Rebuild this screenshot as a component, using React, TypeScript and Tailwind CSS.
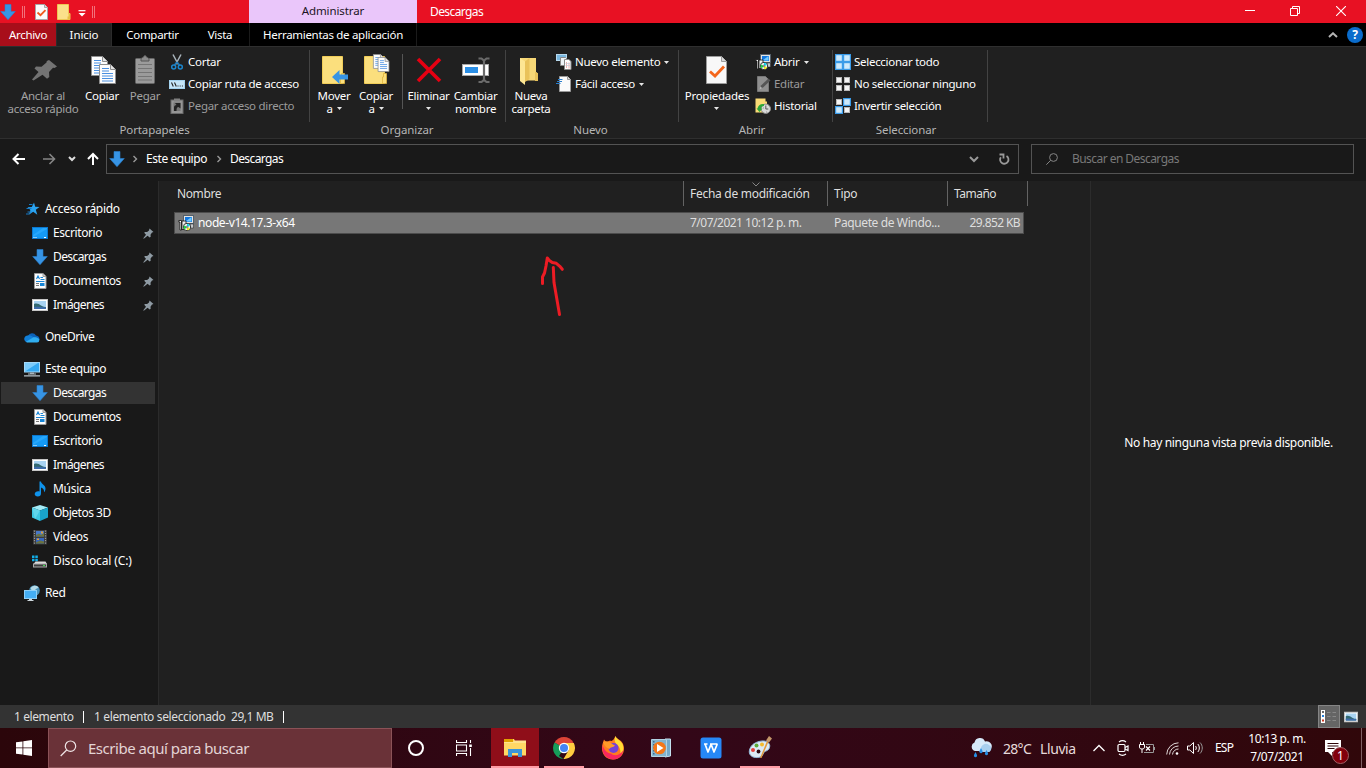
import React from "react";

type IconProps = { className?: string };

/* ---------- shared glyphs ---------- */

const DownArrow = ({ className = "size-4" }: IconProps) => (
  <svg viewBox="0 0 16 16" className={className}>
    <path d="M5 .5h6v7h4.3L8 15.7.7 7.5H5z" fill="#3794e4" stroke="#2a82cf" strokeWidth=".6" />
  </svg>
);

const Caret = () => (
  <svg viewBox="0 0 5 3" className="h-[3px] w-[5px] flex-none">
    <path d="M0 0h5L2.5 3z" fill="#e6e6e6" />
  </svg>
);

const Chevron = ({ className = "h-2 w-1.5" }: IconProps) => (
  <svg viewBox="0 0 6 8" className={className}>
    <path d="M1.5 1l3 3-3 3" fill="none" stroke="#999" strokeWidth="1.4" />
  </svg>
);

const Page = ({ x, y, w, h, lines = 6 }: { x: number; y: number; w: number; h: number; lines?: number }) => (
  <g>
    <path d={`M${x + 0.5} ${y + 0.5}h${w - 6}l5 5v${h - 6}h${-(w - 1)}z`} fill="#fdfdfd" stroke="#8f8f8f" />
    <path d={`M${x + w - 5.5} ${y + 0.5}v5h5`} fill="#e4e4e4" stroke="#8f8f8f" />
    {Array.from({ length: lines }, (_, i) => (
      <path key={i} d={`M${x + 3} ${y + 4.5 + i * 2.5}h${i < 2 ? w - 10 : w - 6}`} stroke="#4a8fe0" />
    ))}
  </g>
);

/* ---------- ribbon icons ---------- */

const PinBig = () => (
  <svg viewBox="0 0 32 32" className="size-8">
    <path d="M22 6l8 6.500-2.500 1.500-1.500-.2-4 4.200.3 5-2.300 1.700-4.500-4L6.500 26.500 5 25.500l6.500-7.500-4-3.500 1.500-2 5.500.2 5-4.200.3-1.500z" fill="#737373" />
  </svg>
);

const CopyBig = () => (
  <svg viewBox="0 0 32 32" className="size-8">
    <Page x={5} y={2} w={17} h={20} lines={6} />
    <Page x={13} y={10} w={17} h={20} lines={6} />
  </svg>
);

const PasteBig = () => (
  <svg viewBox="0 0 32 32" className="size-8">
    <rect x="6.500" y="4.500" width="19" height="25" rx="1" fill="#9b9b9b" stroke="#666" />
    <path d="M12 5.500c0-2 2-2 2.500-2.500.5-2 2.500-2 3 0 .5.500 2.500.5 2.500 2.500v1.500h-8z" fill="#8b8b8b" stroke="#555" />
    <path d="M9 10.500h14M9 14.500h14M9 18.500h14M9 22.500h14M9 26h14" stroke="#757575" />
  </svg>
);

const Scissors = () => (
  <svg viewBox="0 0 16 16" className="size-4">
    <path d="M4 .5L9.300 10.500M12 .5L6.700 10.500" stroke="#a9b4bc" strokeWidth="1.500" fill="none" />
    <path d="M8 8l-2.500 3M8 8l2.500 3" stroke="#1b78b8" strokeWidth="1.500" />
    <circle cx="4.700" cy="13" r="2" fill="none" stroke="#1b86cc" strokeWidth="1.500" />
    <circle cx="11.300" cy="13" r="2" fill="none" stroke="#1b86cc" strokeWidth="1.500" />
  </svg>
);

const PathIcon = () => (
  <svg viewBox="0 0 16 16" className="size-4">
    <rect x=".5" y="4.500" width="15" height="8" fill="#c5e5f8" stroke="#a4d2ee" />
    <path d="M2.500 6.500l1.800 4M5.500 6.500l1.800 4" stroke="#222" strokeWidth="1.100" />
    <path d="M8.500 10h1M10.700 10h1M12.900 10h1" stroke="#222" />
  </svg>
);

const PasteShortcut = () => (
  <svg viewBox="0 0 16 16" className="size-4">
    <rect x="2" y="2" width="12" height="13.500" fill="#969696" stroke="#6b6b6b" />
    <rect x="5" y=".5" width="6" height="3" fill="#808080" />
    <path d="M4.500 4.500h7v8.500h-7z" fill="#777" />
    <path d="M5 13v-3.500C5 8 6 7 7.500 7L6 5h5.500v5.500L9.500 9C8 9 7.500 10.500 7.500 13z" fill="#222" />
  </svg>
);

const FolderShape = () => (
  <g>
    <path d="M4.500 2.500h20v27h-20z" fill="#fbdf7d" stroke="#f1cd58" />
    <path d="M22.500 29.500v-6.500h1V19.500h3v10z" fill="#fbdf7d" stroke="#dfb53d" strokeWidth=".8" />
  </g>
);

const MoveTo = () => (
  <svg viewBox="0 0 32 32" className="size-8">
    <FolderShape />
    <path d="M14 23l7.500-7v4.500H30v5h-8.500V30z" fill="#3794e4" />
  </svg>
);

const CopyTo = () => (
  <svg viewBox="0 0 32 32" className="size-8">
    <FolderShape />
    <g transform="translate(13 0) scale(.78)">
      <Page x={0} y={0} w={15} h={19} lines={5} />
      <Page x={6} y={4} w={15} h={19} lines={5} />
    </g>
  </svg>
);

const DeleteX = () => (
  <svg viewBox="0 0 32 32" className="size-8">
    <path d="M5 5l22 22M27 5L5 27" stroke="#e60012" strokeWidth="3.600" />
  </svg>
);

const Rename = () => (
  <svg viewBox="0 0 32 32" className="size-8">
    <rect x="2.500" y="10.500" width="26" height="11" fill="#fff" stroke="#a8a8a8" />
    <rect x="5" y="13" width="13" height="6" fill="#2b8fe6" />
    <path d="M18.500 4.500h3l2.500 2 2.500-2h3M18.500 28h3l2.500-2 2.500 2h3M24 6v20.500" fill="none" stroke="#6b6b6b" strokeWidth="2.200" />
  </svg>
);

const NewFolder = () => (
  <svg viewBox="0 0 32 32" className="size-8">
    <path d="M5 4h16v14l2 1.500v7H5z" fill="#f7d877" />
    <path d="M10 7.500L14.500 4v21L10 28z" fill="#e9c25a" />
    <path d="M5 4l5 3.500v23.500l-5-4z" fill="#fde694" />
    <path d="M20 18h1l2 1.500v7.500h-3z" fill="#e9c25a" />
  </svg>
);

const NewItem = () => (
  <svg viewBox="0 0 16 16" className="size-4">
    <rect x=".5" y=".5" width="10" height="6" fill="#79b7df" stroke="#b7d9ee" />
    <path d="M4.500 3.500h5l2 2v6h-7z" fill="#eef4f8" stroke="#8a8a8a" />
    <path d="M8.500 5.500h4.500l2 2v8H8.500z" fill="#fff" stroke="#8a8a8a" />
    <path d="M10.500 8v6M13 8.500v6" stroke="#e89c9c" strokeWidth=".8" />
    <path d="M9.500 9.500h5M9.500 11.500h5" stroke="#bcd" strokeWidth=".6" />
  </svg>
);

const EasyAccess = () => (
  <svg viewBox="0 0 16 16" className="size-4">
    <path d="M3.500.5h8l3 3v12h-11z" fill="#fafafa" stroke="#999" />
    <path d="M11.500.5v3h3" fill="#ddd" stroke="#999" />
    <path d="M2 3.500h4.500M1 5.500h5M0 7.500h4.500" stroke="#2b7ecb" strokeWidth="1.100" />
  </svg>
);

const Properties = () => (
  <svg viewBox="0 0 32 32" className="size-8">
    <path d="M5.500 2.500h15l5 5v22h-20z" fill="#f8f8f8" stroke="#9c9c9c" />
    <path d="M20.500 2.500v5h5" fill="#d8d8d8" stroke="#9c9c9c" />
    <path d="M9 17.500l5 4.500L23 12.500" fill="none" stroke="#f4661b" strokeWidth="2.800" />
  </svg>
);

const Installer = () => (
  <svg viewBox="0 0 16 16" className="size-4">
    <rect x="5.500" y=".5" width="10" height="8" fill="#e3e3e3" stroke="#55606a" />
    <rect x="7" y="2" width="7" height="5" fill="#1478e0" />
    <path d="M7.500 6.500L13.500 2v4.500z" fill="#6fcaff" />
    <path d="M12 9h3.500v4H12z" fill="#c4c9cd" stroke="#222" strokeWidth=".5" />
    <path d="M.8 5.500h2.700v9.500H2v-8H.8z" fill="#fff" stroke="#111" strokeWidth=".8" />
    <path d="M4 6h4v8.500H4z" fill="#f2f2f2" stroke="#111" strokeWidth=".8" />
    <circle cx="9" cy="12" r="3.700" fill="#f4f4f4" stroke="#111" strokeWidth=".8" />
    <path d="M9 12V8.800a3.200 3.200 0 013 2.200z" fill="#14d8f4" />
    <path d="M9 12l3.100 1.200A3.200 3.200 0 019 15.200z" fill="#f0f020" />
    <path d="M9 12l-3-1.500A3.200 3.200 0 006.700 14.300z" fill="#1fd84a" />
    <circle cx="9" cy="12" r="1" fill="#fff" stroke="#111" strokeWidth=".5" />
  </svg>
);

const EditIcon = () => (
  <svg viewBox="0 0 16 16" className="size-4">
    <path d="M2.500.5h8l3 3v12h-11z" fill="#8f8f8f" stroke="#777" />
    <path d="M5 12.500l1-3 7.500-7 2 2-7.500 7z" fill="#555" />
    <path d="M4.500 13.500l1-3 1.500 1.500z" fill="#bbb" />
  </svg>
);

const HistoryIcon = () => (
  <svg viewBox="0 0 16 16" className="size-4">
    <path d="M.5.5h10v3h1.500V14.500H.5z" fill="#fadb76" />
    <circle cx="10.800" cy="10.800" r="4.700" fill="#d9d9d9" stroke="#8a8a8a" />
    <path d="M10.800 7.500v3.500h2.500M8 10h.5M11 14h.5" stroke="#555" fill="none" />
    <path d="M2.500 10.500C3 7.500 5.500 5.500 9 6v2C7 8 6.300 9 6 10.500h1.500l-3 3.500-3-3.500z" fill="#2fa739" />
  </svg>
);

const SelectGrid = ({ on }: { on: [boolean, boolean, boolean, boolean] }) => (
  <svg viewBox="0 0 16 16" className="size-4">
    {on.map((active, i) => {
      const x = (i % 2) * 8;
      const y = Math.floor(i / 2) * 8;
      return active ? (
        <g key={i}>
          <rect x={x} y={y} width="8" height="8" fill="#3a9be8" />
          <rect x={x + 1.2} y={y + 1.2} width="5.600" height="5.600" fill="#cde9fb" />
        </g>
      ) : (
        <rect key={i} x={x + 1.5} y={y + 1.5} width="5" height="5" fill="#f5f5f5" stroke="#b9b9b9" />
      );
    })}
  </svg>
);

/* ---------- navigation pane icons ---------- */

const QuickStar = () => (
  <svg viewBox="0 0 16 16" className="size-4">
    <path d="M10 1.500l1.200 4.300 4.300.3-3.700 2.700 1.500 4.900-4.100-2.900-4.300 3 1.500-4.700L3.500 6.300l4.300-.2z" fill="#2aa3f0" />
    <path d="M5 3.500h3.500M2.500 7.500h5M3.500 11h4M2 13h3" stroke="#1679c4" strokeWidth="1.100" />
  </svg>
);

const DesktopIcon = () => (
  <svg viewBox="0 0 16 16" className="size-4">
    <rect x=".5" y="2.500" width="15" height="11" fill="#159af5" stroke="#0b78cf" />
    <path d="M1 12V10L11 3h4v1z" fill="#35b0ff" opacity=".6" />
    <path d="M1.500 12.500h1M3.500 12.500h1M12 12.500h2" stroke="#fff" />
  </svg>
);

const DocIcon = () => (
  <svg viewBox="0 0 16 16" className="size-4">
    <path d="M2.500.5h8.500l3 3v12H2.500z" fill="#fbfbfb" stroke="#9b9b9b" />
    <path d="M11 .5v3h3" fill="#ccc" stroke="#9b9b9b" />
    <path d="M4.500 6l1.500-3 1.500 3M8.500 4.500H11M8.500 6.500h4M4 8.500h8.500" stroke="#1785d6" strokeWidth="1.100" fill="none" />
    <path d="M4 10.500h3M4 12.500h3" stroke="#777" />
    <rect x="8" y="10" width="4.500" height="3" fill="#1785d6" />
  </svg>
);

const ImageIcon = ({ className = "size-4" }: IconProps) => (
  <svg viewBox="0 0 16 16" className={className}>
    <rect x=".5" y="2.500" width="15" height="11" fill="#fff" stroke="#c7c7c7" />
    <rect x="2" y="4" width="12" height="8" fill="#a9d3f2" />
    <path d="M2 7c3-1 5 0 7 1.500s4 1.500 5 1.500v2H2z" fill="#346a72" />
    <path d="M2 10c4-.5 8 0 12 .6V12H2z" fill="#3f6cab" />
  </svg>
);

const OneDriveIcon = () => (
  <svg viewBox="0 0 16 16" className="size-4">
    <path d="M4 7a4.500 4.500 0 018-.5 4 4 0 013.500 4L8 12.500 2 11z" fill="#0d62b8" />
    <path d="M3.500 6.500A3.400 3.400 0 001 12c.5 1 1.500 1.300 2.500 1.300L11 9 7 6.800A4 4 0 003.500 6.500z" fill="#117fd8" />
    <path d="M2 12.800L9.500 8.300c1-.3 4.500-.3 6 2.200a3 3 0 01-2.500 3H3.500c-.6 0-1-.2-1.500-.7z" fill="#30aef0" />
  </svg>
);

const PcIcon = () => (
  <svg viewBox="0 0 16 16" className="size-4">
    <rect x=".5" y="1.500" width="15" height="9.500" fill="#35a9f2" stroke="#a3d8f8" />
    <path d="M1 10.500L14 2H1z" fill="#7ccbfa" />
    <path d="M6 11.500h4v1.500H6z" fill="#9aa8b1" />
    <path d="M4 13h8M0 14.900h16" stroke="#b6c1c8" strokeWidth="1.100" />
  </svg>
);

const MusicIcon = () => (
  <svg viewBox="0 0 16 16" className="size-4">
    <path d="M7.500.5H9c.3 3 4.500 3.500 4.500 7 0 2-.7 3-1.500 3.800.3-2.500-.7-4-3-4.800v5.700A3.300 3.300 0 015.700 15.500C4 15.500 2.700 14.600 2.700 13c0-2 2.500-3.300 4.800-2.600z" fill="#0f93ec" />
  </svg>
);

const CubeIcon = () => (
  <svg viewBox="0 0 16 16" className="size-4">
    <path d="M8 0l8 2.500L8 5.500 0 2.500z" fill="#a4ebf7" />
    <path d="M0 2.500l8 3V16l-8-3.500z" fill="#3cc7e2" />
    <path d="M16 2.500l-8 3V16l8-3.500z" fill="#19a2c9" />
    <path d="M0 2.500l8 3L3 14z" fill="#78dff1" opacity=".6" />
  </svg>
);

const VideoIcon = () => (
  <svg viewBox="0 0 16 16" className="size-4">
    <rect x="1" y="1" width="14" height="14.500" fill="#3b3b3b" />
    <path d="M2.500 1.500v14M13.500 1.500v14" stroke="#999" strokeWidth="1.200" strokeDasharray="1.200 1.200" />
    <rect x="4" y="2" width="8" height="5.500" fill="#4878c8" />
    <rect x="4" y="9" width="8" height="5.500" fill="#3767bd" />
    <path d="M4 6l3-1.500 2 1.500 3-2v3.500H4zM4 13.500l4-2 4 1v2H4z" fill="#6b7440" />
    <path d="M9 2.500h2v2H9zM5 9.500h2v1.500H5z" fill="#e0a03a" />
  </svg>
);

const DiskIcon = () => (
  <svg viewBox="0 0 16 16" className="size-4">
    <path d="M0 2.500h2.500V5H0zM3.300 2.500h2.500V5H3.300zM0 5.800h2.500v2.500H0zM3.300 5.800h2.500v2.500H3.300z" fill="#12afe9" />
    <path d="M3.500 8.500h10L15 11H1.500z" fill="#dcdcdc" />
    <path d="M1 10.500h14v4H1z" fill="#a8a8a8" />
    <path d="M2 11.500h12v2H2z" fill="#3e3e3e" />
    <path d="M11 12.500h2" stroke="#3ddc4d" />
  </svg>
);

const NetworkIcon = () => (
  <svg viewBox="0 0 16 16" className="size-4">
    <circle cx="10.500" cy="5.500" r="5.300" fill="#4a92b9" />
    <path d="M6.500 3a5.500 5.500 0 018-.8c-1 1.500-2 1-3 2.300S9.500 7 8 6z" fill="#b4dbe8" />
    <rect x=".5" y="5.500" width="12" height="8" fill="#45aef4" stroke="#8fd0f8" />
    <path d="M5 14h3v1.200H5zM3.500 15h6v.9h-6z" fill="#cfd8dd" />
  </svg>
);

const SmallPin = () => (
  <svg viewBox="0 0 11 11" className="size-[11px]">
    <path d="M6.500.5l4 3.500-1.500.5-1.500 2.200.2 2.100-1.100.7-2-1.800L.8 10.700l-.5-.5L3 6.700 1.200 4.800l.8-.9 2.100.1 1.900-1.500z" fill="#8f9ba4" />
  </svg>
);

/* ---------- window chrome ---------- */

const TitleBar = () => (
  <header className="flex h-[23px] w-full bg-[#e81123] text-[12px] text-white">
    <div className="flex w-[249px] items-center">
      <DownArrow />
      <span className="ml-1.5 h-3 w-[3px] border-x border-[#f2707b]" />
      <svg viewBox="0 0 13 16" className="ml-[10px] h-4 w-[13px]">
        <path d="M.5.5h9l3 3v12H.5z" fill="#fbfbfb" stroke="#a7a7a7" />
        <path d="M9.500.5v3h3" fill="#ddd" stroke="#a7a7a7" />
        <path d="M2.500 8.500l3 2.700 5-5" fill="none" stroke="#f05a1e" strokeWidth="1.800" />
      </svg>
      <svg viewBox="0 0 14 16" className="ml-[9px] h-4 w-3.5">
        <path d="M.5.500h11v9h1.500v6H.5z" fill="#fbe08a" stroke="#edc654" />
        <path d="M10.500 15.500v-3h1V10H13v5.500z" fill="#e9bd42" />
      </svg>
      <svg viewBox="0 0 8 7" className="mt-1 ml-[7px] h-[7px] w-2">
        <path d="M.5.700h7" stroke="#fff" strokeWidth="1.200" />
        <path d="M.5 3h7L4 6.500z" fill="#fff" />
      </svg>
      <span className="ml-1.5 h-3 w-[3px] border-x border-[#f2707b]" />
    </div>
    <div className="flex w-[168px] justify-center bg-[#eac6fa] text-[11.5px] leading-[21px] tracking-[-.1px] text-[#1b141e]">Administrar</div>
    <div className="flex-1 pl-[13px] leading-6 tracking-[-.6px]">Descargas</div>
    <div className="flex h-[21px] w-[139px] items-center pl-[18px]">
      <span className="h-px w-2.5 bg-white" />
      <svg viewBox="0 0 10 10" className="ml-[35px] size-2.5" fill="none" stroke="#fff">
        <path d="M.5 2.500h7v7h-7zM2.500 2.500v-2h7v7h-2" />
      </svg>
      <svg viewBox="0 0 10 10" className="ml-9 size-2.5" stroke="#fff" strokeWidth="1.100">
        <path d="M0 0l10 10M10 0L0 10" />
      </svg>
    </div>
  </header>
);

const TabBar = () => (
  <nav className="flex h-[23px] bg-black text-center text-[11.5px] leading-6 tracking-[-.3px] whitespace-nowrap text-white">
    <div className="w-14 bg-[#a80e1a]">Archivo</div>
    <div className="w-14 border-x border-t border-[#2b2b2b] bg-[#202020] leading-[22px] tracking-[-.1px]">Inicio</div>
    <div className="w-[81px]">Compartir</div>
    <div className="w-[54px]">Vista</div>
    <div className="ml-0.5 w-[168px] border-x border-[#1b1b1b]">Herramientas de aplicación</div>
    <div className="flex flex-1 items-center justify-end gap-[9px] pr-[3px]">
      <svg viewBox="0 0 10 6" className="h-1.5 w-2.5">
        <path d="M1 5l4-3.700L9 5" fill="none" stroke="#b5b5b5" strokeWidth="2" />
      </svg>
      <span className="flex size-4 items-center justify-center rounded-full bg-[#0a6ccc] text-[12px] font-bold leading-none">?</span>
    </div>
  </nav>
);

/* ---------- ribbon ---------- */

const Big = ({ w, icon, lines, caret, dim }: { w: string; icon: React.ReactNode; lines: string[]; caret?: boolean; dim?: boolean }) => (
  <div className={`flex flex-none flex-col items-center ${w} ${dim ? "text-[#a3a3a3]" : "text-white"}`}>
    {icon}
    <div className="mt-[3px] flex flex-col items-center whitespace-nowrap">
      {lines.map((line, i) => (
        <span key={line} className="flex h-[13px] items-center gap-1 leading-[13px]">
          {line}
          {caret && i === 1 && <Caret />}
        </span>
      ))}
      {caret && lines.length === 1 && (
        <span className="flex h-3 items-center">
          <Caret />
        </span>
      )}
    </div>
  </div>
);

const Small = ({ icon, label, caret, dim }: { icon: React.ReactNode; label: string; caret?: boolean; dim?: boolean }) => (
  <div className={`flex h-[22px] items-center gap-[3px] whitespace-nowrap ${dim ? "text-[#9b9b9b]" : "text-white"}`}>
    {icon}
    <span>{label}</span>
    {caret && (
      <span className="ml-px">
        <Caret />
      </span>
    )}
  </div>
);

const Group = ({ w, label, labelPad = "", children }: { w: string; label: string; labelPad?: string; children: React.ReactNode }) => (
  <section className={`flex flex-none flex-col ${w}`}>
    <div className="mt-[3px] flex h-[72px] border-r border-[#434343] pt-1">{children}</div>
    <div className={`h-4 text-center leading-4 tracking-[-.1px] text-[#b5b5b5] ${labelPad}`}>{label}</div>
  </section>
);

const Ribbon = () => (
  <div className="flex h-[93px] border-y border-[#2f2f2f] bg-[#202020] text-[11.5px] tracking-[-.28px]">
    <Group w="w-[310px]" label="Portapapeles" labelPad="pr-px">
      <Big w="w-[86px]" icon={<PinBig />} lines={["Anclar al", "acceso rápido"]} dim />
      <Big w="w-8" icon={<CopyBig />} lines={["Copiar"]} />
      <Big w="w-[54px]" icon={<PasteBig />} lines={["Pegar"]} dim />
      <div className="-mt-[3px] -ml-[3px] flex flex-col">
        <Small icon={<Scissors />} label="Cortar" />
        <Small icon={<PathIcon />} label="Copiar ruta de acceso" />
        <Small icon={<PasteShortcut />} label="Pegar acceso directo" dim />
      </div>
    </Group>
    <Group w="w-[196px]" label="Organizar" labelPad="pr-0.5">
      <Big w="w-12" icon={<MoveTo />} lines={["Mover", "a"]} caret />
      <Big w="w-9" icon={<CopyTo />} lines={["Copiar", "a"]} caret />
      <span className="ml-2 h-[55px] w-px bg-[#555]" />
      <Big w="w-[51px]" icon={<DeleteX />} lines={["Eliminar"]} caret />
      <Big w="w-[43px]" icon={<Rename />} lines={["Cambiar", "nombre"]} />
    </Group>
    <Group w="w-[173px]" label="Nuevo" labelPad="pr-1">
      <Big w="w-[50px]" icon={<NewFolder />} lines={["Nueva", "carpeta"]} />
      <div className="-mt-[3px] flex flex-col">
        <Small icon={<NewItem />} label="Nuevo elemento" caret />
        <Small icon={<EasyAccess />} label="Fácil acceso" caret />
      </div>
    </Group>
    <Group w="w-[154px]" label="Abrir" labelPad="pr-2">
      <Big w="w-[76px]" icon={<Properties />} lines={["Propiedades"]} caret />
      <div className="-mt-[3px] flex flex-col">
        <Small icon={<Installer />} label="Abrir" caret />
        <Small icon={<EditIcon />} label="Editar" dim />
        <Small icon={<HistoryIcon />} label="Historial" />
      </div>
    </Group>
    <Group w="w-[155px]" label="Seleccionar" labelPad="pr-[9px]">
      <div className="-mt-[3px] flex flex-col pl-0.5">
        <Small icon={<SelectGrid on={[true, true, true, true]} />} label="Seleccionar todo" />
        <Small icon={<SelectGrid on={[false, false, false, false]} />} label="No seleccionar ninguno" />
        <Small icon={<SelectGrid on={[false, true, true, false]} />} label="Invertir selección" />
      </div>
    </Group>
  </div>
);

/* ---------- address bar ---------- */

const AddressBar = () => (
  <div className="flex h-[42px] items-start bg-[#191919] pt-[5px] text-[12px] text-white">
    <div className="flex h-[30px] w-[106px] items-center pl-3">
      <svg viewBox="0 0 14 12" className="h-3 w-3.5" fill="none" stroke="#fff" strokeWidth="2">
        <path d="M13 6H2M6.500 1L1.500 6l5 5" />
      </svg>
      <svg viewBox="0 0 14 12" className="ml-4 h-3 w-3.5" fill="none" stroke="#858585" strokeWidth="1.600">
        <path d="M1 6h11M7.500 1l5 5-5 5" />
      </svg>
      <svg viewBox="0 0 8 6" className="ml-3 h-1.5 w-2" fill="none" stroke="#ddd" strokeWidth="2">
        <path d="M1 1l3 3 3-3" />
      </svg>
      <svg viewBox="0 0 12 14" className="ml-[11px] h-3.5 w-3" fill="none" stroke="#fff" strokeWidth="2">
        <path d="M6 13V2M1 7l5-5 5 5" />
      </svg>
    </div>
    <div className="flex h-[30px] w-[913px] items-center border border-[#535353] pl-0.5">
      <DownArrow />
      <Chevron className="ml-[7px] h-2 w-1.5" />
      <span className="ml-2 w-[61px] whitespace-nowrap tracking-[-.45px]">Este equipo</span>
      <Chevron className="ml-[9px] h-2 w-1.5" />
      <span className="ml-2 tracking-[-.6px]">Descargas</span>
      <svg viewBox="0 0 10 7" className="ml-auto h-[7px] w-2.5" fill="none" stroke="#999" strokeWidth="2">
        <path d="M1 1l4 4 4-4" />
      </svg>
      <svg viewBox="0 0 12 12" className="mr-2 ml-[19px] size-3" fill="none" stroke="#999" strokeWidth="1.800">
        <path d="M8.500 3A4.200 4.200 0 112.800 4.200M1.500 1.500h4v4" />
      </svg>
    </div>
    <div className="ml-3 flex h-[30px] w-[323px] items-center border border-[#535353] pl-3.5 text-[#787878]">
      <svg viewBox="0 0 12 12" className="size-3" fill="none" stroke="#858585">
        <circle cx="7.500" cy="4.500" r="3.900" />
        <path d="M4.700 7.300L.3 11.700" />
      </svg>
      <span className="ml-3.5 tracking-[-.55px]">Buscar en Descargas</span>
    </div>
  </div>
);

/* ---------- body ---------- */

type NavItem = { label: string; icon: React.ReactNode; root?: boolean; pin?: boolean; active?: boolean; gap?: boolean; spacing?: string };

const navItems: NavItem[] = [
  { label: "Acceso rápido", icon: <QuickStar />, root: true, spacing: "tracking-[-.3px]" },
  { label: "Escritorio", icon: <DesktopIcon />, pin: true },
  { label: "Descargas", icon: <DownArrow />, pin: true, spacing: "tracking-[-.6px]" },
  { label: "Documentos", icon: <DocIcon />, pin: true },
  { label: "Imágenes", icon: <ImageIcon />, pin: true, spacing: "tracking-[-.65px]" },
  { label: "OneDrive", icon: <OneDriveIcon />, root: true, gap: true, spacing: "tracking-[-.5px]" },
  { label: "Este equipo", icon: <PcIcon />, root: true, gap: true, spacing: "tracking-[-.45px]" },
  { label: "Descargas", icon: <DownArrow />, active: true, spacing: "tracking-[-.6px]" },
  { label: "Documentos", icon: <DocIcon /> },
  { label: "Escritorio", icon: <DesktopIcon /> },
  { label: "Imágenes", icon: <ImageIcon />, spacing: "tracking-[-.65px]" },
  { label: "Música", icon: <MusicIcon />, spacing: "tracking-[-.3px]" },
  { label: "Objetos 3D", icon: <CubeIcon />, spacing: "tracking-[-.5px]" },
  { label: "Videos", icon: <VideoIcon /> },
  { label: "Disco local (C:)", icon: <DiskIcon />, spacing: "tracking-[-.13px]" },
  { label: "Red", icon: <NetworkIcon />, root: true, gap: true },
];

const Sidebar = () => (
  <aside className="w-[159px] flex-none border-r border-[#2b2b2b] bg-[#191919] pt-4 text-[12px] text-white">
    {navItems.map((item, i) => (
      <div key={i} className={`flex h-6 w-[155px] items-center pl-px ${item.gap ? "mt-2" : ""}`}>
        <div
          className={`flex h-[22px] flex-1 items-center gap-[5px] whitespace-nowrap ${item.root ? "pl-[23px]" : "pl-[31px]"} ${
            item.active ? "bg-[#333]" : ""
          }`}
        >
          {item.icon}
          <span className={item.spacing ?? "tracking-[-.4px]"}>{item.label}</span>
          {item.pin && (
            <span className="mr-px ml-auto">
              <SmallPin />
            </span>
          )}
        </div>
      </div>
    ))}
  </aside>
);

const FileList = () => (
  <main className="relative w-[931px] flex-none bg-[#202020] text-[12px]">
    <div className="flex h-[25px] items-center tracking-[-.28px] text-[#dedede]">
      <div className="w-[524px] pl-[18px] tracking-[-.4px]">Nombre</div>
      <div className="h-full w-36 border-l border-[#636363] pl-1.5 leading-[25px]">Fecha de modificación</div>
      <div className="h-full w-[120px] border-l border-[#636363] pl-1.5 leading-[25px]">Tipo</div>
      <div className="h-full w-[81px] border-x border-[#636363] pl-1.5 leading-[25px] tracking-[-.5px]">Tamaño</div>
    </div>
    <div className="mt-1.5 ml-[15px] flex h-[22px] w-[850px] items-center border border-[#4c4c4c] bg-[#777] whitespace-nowrap text-[#dedede]">
      <span className="ml-[3px] flex">
        <Installer />
      </span>
      <span className="ml-1 w-[492px] tracking-[-.4px] text-white">node-v14.17.3-x64</span>
      <span className="w-36 tracking-[-.5px]">7/07/2021 10:12 p. m.</span>
      <span className="w-[110px] tracking-[-.38px]">Paquete de Windo...</span>
      <span className="ml-auto pr-[3px] tracking-[-.6px]">29.852 KB</span>
    </div>
    <svg viewBox="0 0 8 5" className="absolute top-px left-[593px] h-[5px] w-2" fill="none" stroke="#858585">
      <path d="M.5.500L4 4 7.500.500" />
    </svg>
    <svg viewBox="0 0 30 66" className="absolute top-[72px] left-[378px] h-[66px] w-[30px]" fill="none" stroke="#ed1c24" strokeWidth="3" strokeLinecap="round" strokeLinejoin="round">
      <path d="M5.500 30.500V24l2-4 1.500-7 1.300-8 2 2.500 3 2 4 .8 3.500 3 2.500 3" />
      <path d="M16.300 14.500l.7 15 2.500 14.500 3 17.500" />
    </svg>
  </main>
);

const StatusBar = () => (
  <footer className="flex h-[23px] items-center bg-[#333] pl-3.5 text-[12px] tracking-[-.4px] text-[#dedede]">
    <span className="w-[69px] whitespace-nowrap">1 elemento</span>
    <span className="h-3 w-px bg-white" />
    <span className="ml-[10px] w-[137px] whitespace-nowrap tracking-[-.36px]">1 elemento seleccionado</span>
    <span className="w-[52px] whitespace-nowrap tracking-[-.45px]">29,1 MB</span>
    <span className="h-3 w-px bg-white" />
    <span className="ml-auto flex h-[23px] w-[22px] items-center justify-center border border-[#858585] bg-[#656565]">
      <svg viewBox="0 0 16 13" className="h-[13px] w-4">
        <path d="M0 0h4v13H0z" fill="#fff" />
        <path d="M1 1h2v2H1z" fill="#6b6b6b" />
        <path d="M1 5h2v2H1z" fill="#2581dc" />
        <path d="M1 9.500h2v2H1z" fill="#cc3520" />
        <path d="M6 2.500h3.500M11.500 2.500H15M6 6.500h3.500M11.500 6.500H15M6 10.500h3.500M11.500 10.500H15" stroke="#888" />
      </svg>
    </span>
    <ImageIcon className="mr-2 ml-1 size-3.5" />
  </footer>
);

/* ---------- taskbar ---------- */

const TaskButton = ({ w, line, bg, children }: { w: string; line?: string; bg?: string; children: React.ReactNode }) => (
  <div className={`flex h-10 flex-none flex-col items-center ${w} ${bg ?? ""}`}>
    <span className="flex h-[38px] items-center pt-0.5">{children}</span>
    {line && <span className={`h-0.5 bg-[#ff9ca5] ${line}`} />}
  </div>
);

const Taskbar = () => (
  <div className="flex h-10 items-center bg-linear-to-r from-[#2b060a] via-[#330718] to-[#30070a] text-white">
    <div className="flex w-12 flex-none justify-center">
      <svg viewBox="0 0 16 16" className="size-4" fill="#fff">
        <path d="M0 2.300L6.500 1.400v6.100H0zM7.300 1.300L16 0v7.500H7.300zM0 8.300h6.500v6.200L0 13.700zM7.300 8.300H16V16l-8.700-1.300z" />
      </svg>
    </div>
    <div className="flex h-10 w-[344px] flex-none items-center border border-[#8b5257] bg-[#6a3238] pl-[11px] text-[15px] text-[#e3d4d5]">
      <svg viewBox="0 0 17 17" className="size-[17px]" fill="none" stroke="#efe5e6" strokeWidth="1.200">
        <circle cx="10.500" cy="6.200" r="5.200" />
        <path d="M6.700 10L.7 16" />
      </svg>
      <span className="ml-[11px] tracking-[-.48px]">Escribe aquí para buscar</span>
    </div>
    <div className="flex w-12 flex-none justify-center pr-px">
      <span className="size-4 rounded-full border-[2.500px] border-[2px] border-white" />
    </div>
    <div className="flex w-[51px] flex-none justify-center pr-[3px]">
      <svg viewBox="0 0 16 16" className="size-4" fill="none" stroke="#fff" strokeWidth="1.100">
        <path d="M.5 0v2.500h10V0M.5 16v-2.500h10V16M.5 5h10v6H.5zM14.500 0v3M14.500 8v8" />
        <path d="M13.200 4.500h2.600V7h-2.600z" fill="#fff" stroke="none" />
      </svg>
    </div>
    <TaskButton w="w-12" bg="bg-[#8f0e19]" line="w-12">
      <svg viewBox="0 0 22 20" className="h-5 w-[22px]">
        <path d="M0 1h10l1 2H22v14.500H0z" fill="#ffd765" />
        <path d="M0 1h9v3H0z" fill="#e2a100" />
        <path d="M0 4h9l1.500-1.500H22V5H0z" fill="#ffe38f" />
        <path d="M4 11h14v8h-4v-4H8v4H4z" fill="#3b95d9" />
      </svg>
    </TaskButton>
    <TaskButton w="w-[50px]" line="w-10">
      <svg viewBox="0 0 22 22" className="size-[22px]">
        <path d="M11 11L1.500 5.500A11 11 0 0120.500 5.500z" fill="#db4437" />
        <path d="M11 11L6 19l4.500 3A11 11 0 011.500 5.500z" fill="#169d5a" />
        <path d="M11 6h9.800A11 11 0 0110.500 22l5-8.500z" fill="#ffcd40" />
        <circle cx="11" cy="11" r="5.200" fill="#fff" />
        <circle cx="11" cy="11" r="4" fill="#4385f5" />
      </svg>
    </TaskButton>
    <TaskButton w="w-12">
      <svg viewBox="0 0 24 24" className="size-6">
        <path d="M1.500 8L3 3.500l2.500 3C7 5 9 4.500 10.500 5c1-.5 2.500-1.500 4-5 .7 2.500 5 3.500 7 7 3.500 6 1 16-9.500 16.500C3 23.500-.5 15 1.500 8z" fill="#ff7b1f" />
        <path d="M14.500 0c.5 3 5 4 7 8 2 5 0 9-2.500 12 1-4 .5-8-2.500-11-2-1-4-5-2-9z" fill="#ffdc35" />
        <path d="M1.500 9C.5 15 3 22.500 12 23.500c6 0 9.500-4 10-9-3 5-9 6-12 3-4 0-7-4-8.500-8.500z" fill="#f9275f" />
        <circle cx="12.500" cy="12" r="5" fill="#7442d8" />
        <path d="M2 6c3-1.500 7-.5 9 2l3 1.500c-2 2.500-4.500 1-5.500 3.500-3-1-5-3-6.500-7z" fill="#ff9a28" />
      </svg>
    </TaskButton>
    <TaskButton w="w-[48px]">
      <svg viewBox="0 0 20 20" className="size-5">
        <path d="M14 1h5.500v17L14 19z" fill="#73a8c8" stroke="#c4e1ef" />
        <path d="M.5 1.500h15v17H.5z" fill="#82b3ce" stroke="#b1d3e3" />
        <path d="M2 3h1.500v1.500H2zM2 6h1.500v1.500H2zM2 9h1.500v1.500H2zM2 12h1.500v1.500H2zM2 15h1.500v1.500H2z" fill="#426f8c" />
        <circle cx="8.500" cy="10" r="6.300" fill="#f47718" />
        <path d="M6 6l6.500 4L6 14z" fill="#fff" />
      </svg>
    </TaskButton>
    <TaskButton w="w-[51px]">
      <svg viewBox="0 0 22 22" className="size-[22px]">
        <rect x=".5" y=".5" width="21" height="21" rx="2.500" fill="#2688f7" />
        <path d="M4 7h3.500M5 7l3 8 3-7.500M10 7h7.500M11 7l3 8 3.300-8" fill="none" stroke="#fff" strokeWidth="1.700" strokeLinejoin="round" />
      </svg>
    </TaskButton>
    <TaskButton w="w-12" line="w-10">
      <svg viewBox="0 0 24 24" className="size-6">
        <path d="M11 5.500c7-2 12 1.500 10.500 6-1 4-5 3-6 5.500-1 3-3 5-8 4.500C3 21 .5 18 1.500 14c1-4 4-7 9.500-8.500z" fill="#dceaf5" stroke="#92b9d9" />
        <circle cx="10.500" cy="15.500" r="1.900" fill="#2b0912" />
        <circle cx="5" cy="14" r="2" fill="#e3413c" />
        <circle cx="8.500" cy="9.500" r="2" fill="#5bab39" />
        <circle cx="14" cy="8.500" r="2" fill="#f4ba2c" />
        <path d="M12 22l7-17 1.500.8L13.500 22z" fill="#e29a3e" />
        <path d="M18 4.500L21 0l3 2.500-3 4z" fill="#c4976a" />
      </svg>
    </TaskButton>

    <div className="ml-auto flex h-10 flex-none items-center">
      <svg viewBox="0 0 22 20" className="h-5 w-[22px]">
        <path d="M4 13A4.500 4.500 0 013.500 4.500 5.500 5.500 0 0114 3.500 5 5 0 0117.500 13z" fill="#d7eafa" />
        <path d="M10 12a5 5 0 018-5 4 4 0 01.500 7H8z" fill="#a8cfef" />
        <path d="M4.500 14l1.400 2.800a1.600 1.600 0 11-2.800 0zM10 10l1.400 2.800a1.600 1.600 0 11-2.800 0zM15.500 12l1.400 2.800a1.600 1.600 0 11-2.800 0z" fill="#278fe5" />
      </svg>
      <span className="ml-2.5 w-[37px] text-[14px] tracking-[-.7px] text-[#e6dadb]">28°C</span>
      <span className="w-[53px] text-[14px] tracking-[-.4px] text-[#e6dadb]">Lluvia</span>
      <svg viewBox="0 0 12 8" className="h-2 w-3" fill="none" stroke="#fff" strokeWidth="1.300">
        <path d="M.5 7L6 1.500 11.500 7" />
      </svg>
      <svg viewBox="0 0 12 16" className="ml-3 h-4 w-3" fill="none" stroke="#fff" strokeWidth="1.200">
        <rect x="1" y="4.500" width="7" height="7" rx="1.200" />
        <path d="M8 7.500l3-1.500v4.500L8 9M2 2c2-1.500 5-1.500 7 0M2 14c2 1.500 5 1.500 7 0" />
      </svg>
      <svg viewBox="0 0 16 14" className="ml-2.5 h-3.5 w-4" fill="none" stroke="#fff">
        <path d="M.5 3.500h5v2.500c0 1.500-1 2-2.500 2S.5 7.500.500 6zM1.500 1v2M4.500 1v2M3 8v4" />
        <path d="M7 3.500h7.500v8H5" stroke="#999" />
        <path d="M15.500 6v3" stroke="#999" />
        <path d="M7 5.500l4 4M11 5.500l-4 4" strokeWidth="1.200" />
      </svg>
      <svg viewBox="0 0 14 13" className="ml-[11px] h-[13px] w-3.5" fill="none" stroke="#e0d8d8">
        <path d="M.7 12.500A12 12 0 0112.500.8M3.500 12.500a9 9 0 019-8.500M6.500 12.500a6 6 0 016-5.500" />
        <circle cx="11" cy="11.500" r="1.300" fill="#fff" stroke="none" />
      </svg>
      <svg viewBox="0 0 17 14" className="ml-[7px] h-3.5 w-[17px]" fill="none" stroke="#fff">
        <path d="M.5 5h2.300L6.500 1.500v11L2.800 9H.5z" />
        <path d="M8.500 5c1 1 1 3 0 4M10.800 3c2 2.300 2 5.700 0 8" />
        <path d="M13 1.500c3 3 3 8 0 11" stroke="#999" />
      </svg>
      <span className="ml-[11px] w-[19px] text-[12px] tracking-[-.8px]">ESP</span>
      <div className="ml-[11px] flex w-[64px] flex-col items-center text-[12px] leading-[18px] tracking-[-.4px] whitespace-nowrap">
        <span>10:13 p. m.</span>
        <span>7/07/2021</span>
      </div>
      <div className="relative ml-4 h-6 w-6">
        <svg viewBox="0 0 24 24" className="size-6">
          <path d="M0 4h16v12H7v4l-4-4H0z" fill="#fff" />
          <path d="M2.500 7.500h11M2.500 10h11M2.500 12.500h7" stroke="#30070a" />
        </svg>
        <span className="absolute top-[11px] left-[7px] flex size-[17px] items-center justify-center rounded-full border border-[#a06065] bg-[#82000c] text-[12px] leading-none">1</span>
      </div>
      <span className="ml-3 h-10 w-px bg-[#806064]" />
      <span className="w-1" />
    </div>
  </div>
);

export default function App() {
  return (
    <div className="flex h-[768px] w-[1366px] flex-col overflow-hidden bg-[#191919] font-['Noto_Sans','Open_Sans',sans-serif]">
      <TitleBar />
      <TabBar />
      <Ribbon />
      <AddressBar />
      <div className="flex h-[524px] flex-none">
        <Sidebar />
        <FileList />
        <section className="flex flex-1 items-center justify-center border-l border-[#2c2c2c] bg-[#202020] text-[12px] tracking-[-.33px] whitespace-nowrap text-white">
          No hay ninguna vista previa disponible.
        </section>
      </div>
      <StatusBar />
      <Taskbar />
    </div>
  );
}
